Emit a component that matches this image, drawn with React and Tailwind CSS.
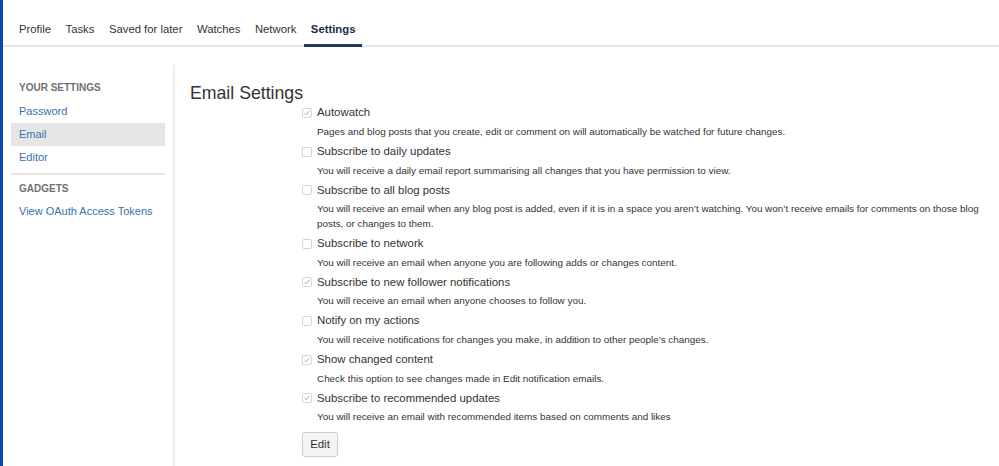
import React from 'react';

const tabs = ['Profile', 'Tasks', 'Saved for later', 'Watches', 'Network', 'Settings'];

const options = [
  { label: 'Autowatch', checked: true, desc: 'Pages and blog posts that you create, edit or comment on will automatically be watched for future changes.' },
  { label: 'Subscribe to daily updates', checked: false, desc: 'You will receive a daily email report summarising all changes that you have permission to view.' },
  { label: 'Subscribe to all blog posts', checked: false, desc: 'You will receive an email when any blog post is added, even if it is in a space you aren\u2019t watching. You won\u2019t receive emails for comments on those blog posts, or changes to them.' },
  { label: 'Subscribe to network', checked: false, desc: 'You will receive an email when anyone you are following adds or changes content.' },
  { label: 'Subscribe to new follower notifications', checked: true, desc: 'You will receive an email when anyone chooses to follow you.' },
  { label: 'Notify on my actions', checked: false, desc: 'You will receive notifications for changes you make, in addition to other people\u2019s changes.' },
  { label: 'Show changed content', checked: true, desc: 'Check this option to see changes made in Edit notification emails.' },
  { label: 'Subscribe to recommended updates', checked: true, desc: 'You will receive an email with recommended items based on comments and likes' },
];

function Checkbox({ checked }) {
  return (
    <span className="w-[10px] h-[10px] border border-[#d6d6d6] rounded-[2px] bg-white flex items-center justify-center shrink-0">
      {checked && (
        <svg width="8" height="8" viewBox="0 0 8 8">
          <path d="M1.6 4.2 L3.2 5.7 L6.4 2.1" fill="none" stroke="#9a9a9a" strokeWidth="0.9" />
        </svg>
      )}
    </span>
  );
}

export default function App() {
  return (
    <div className="w-[999px] h-[466px] overflow-hidden bg-white flex text-[#333]" style={{ fontFamily: '"Liberation Sans", Arial, sans-serif' }}>
      <div className="w-[3px] bg-[#0a47b0] shrink-0" />
      <div className="flex-1 flex flex-col">
        <nav className="h-[47px] border-b-2 border-[#e6e6e6] flex items-end pl-[16px] gap-[14.5px]">
          {tabs.map((t) => (
            <div
              key={t}
              className={`pb-[8px] text-[11.3px] leading-[14px] border-b-[3px] -mb-[2px] ${t === 'Settings' ? 'font-bold text-[#172b4d] border-[#253858] px-[7px] -mx-[7px]' : 'border-transparent'}`}
            >
              {t}
            </div>
          ))}
        </nav>
        <div className="flex flex-1 mt-[18px]">
          <aside className="w-[154px] ml-[8px] pt-[16px] shrink-0">
            <h3 className="px-[8px] text-[10px] font-bold text-[#707070] leading-[14px] mb-[4.5px]">YOUR SETTINGS</h3>
            <a className="block px-[8px] h-[23px] leading-[23px] text-[11px] text-[#3572b0]">Password</a>
            <a className="block px-[8px] h-[23px] leading-[23px] text-[11px] text-[#3572b0] bg-[#e6e6e6]">Email</a>
            <a className="block px-[8px] h-[23px] leading-[23px] text-[11px] text-[#3572b0]">Editor</a>
            <div className="border-t-2 border-[#e6e6e6] mt-[4px] mb-[7px]" />
            <h3 className="px-[8px] text-[10px] font-bold text-[#707070] leading-[14px] mb-[4.5px]">GADGETS</h3>
            <a className="block px-[8px] h-[23px] leading-[23px] text-[11px] text-[#3572b0] whitespace-nowrap">View OAuth Access Tokens</a>
          </aside>
          <div className="w-[2px] bg-[#ececec] ml-[8px] shrink-0" />
          <main className="flex-1 pl-[15px] pt-[16px]">
            <h1 className="text-[17.7px] leading-[24px] text-[#333] font-normal">Email Settings</h1>
            <div className="pl-[112px] -mt-[2px]">
              {options.map((o) => (
                <div key={o.label} className="mb-[2.6px]">
                  <div className="flex items-center gap-[5px] h-[20px]">
                    <Checkbox checked={o.checked} />
                    <span className="text-[11.4px] text-[#333]">{o.label}</span>
                  </div>
                  <p className="pl-[15px] mt-[1px] text-[9.9px] leading-[15px] text-[#333] max-w-[690px]">{o.desc}</p>
                </div>
              ))}
              <button className="mt-[5px] h-[25px] w-[36px] border border-[#ccc] rounded-[3px] bg-[#f5f5f5] text-[11.4px] text-[#333]">Edit</button>
            </div>
          </main>
        </div>
      </div>
    </div>
  );
}
